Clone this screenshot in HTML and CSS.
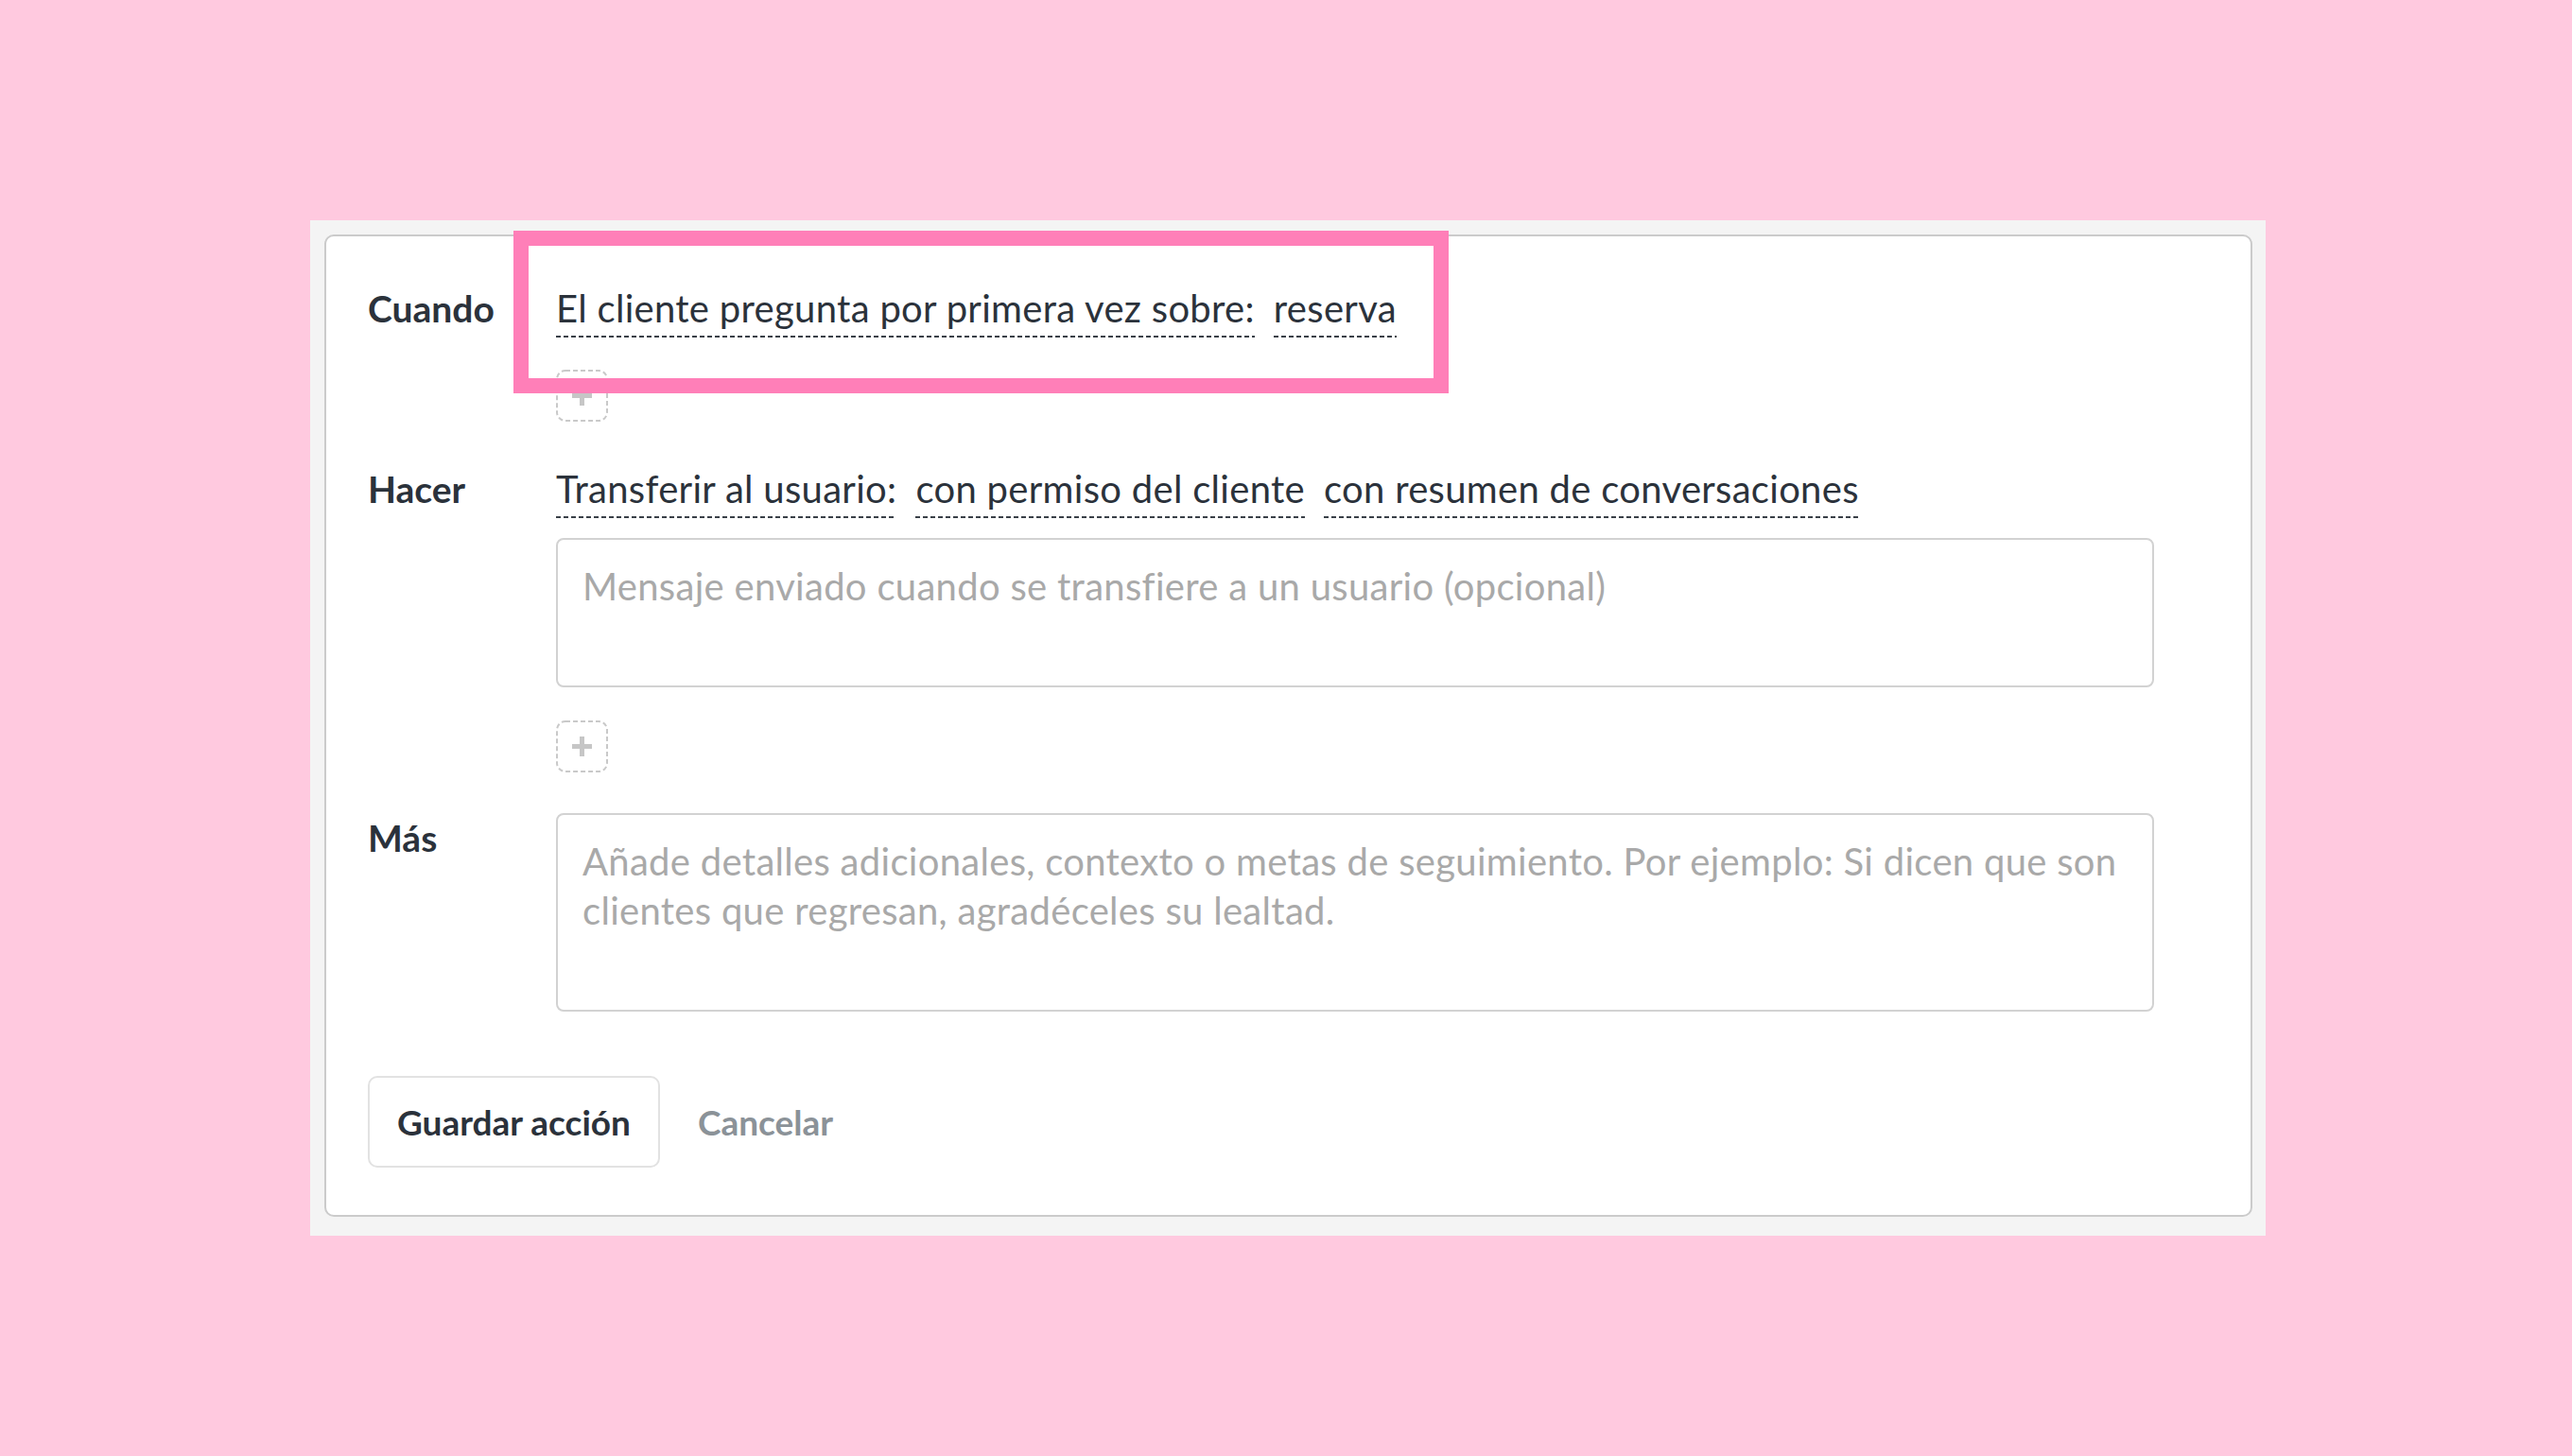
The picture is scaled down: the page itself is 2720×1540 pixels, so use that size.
FILE: index.html
```html
<!DOCTYPE html>
<html lang="es">
<head>
    <meta charset="UTF-8">
    <meta name="viewport" content="width=device-width, initial-scale=1.0">
    <title>Acción</title>
    <link rel="stylesheet" href="styles.css">
</head>
<body>
    <div class="frame">
        <div class="card">
            <div class="highlight"></div>

            <div class="row">
                <div class="label">Cuando</div>
                <div class="content">
                    <div class="tokens">
                        <span class="token">El cliente pregunta por primera vez sobre:</span>
                        <span class="token">reserva</span>
                    </div>
                    <button class="add add-first">
                        <svg width="55" height="55" viewBox="0 0 55 55">
                            <rect x="1" y="1" width="53" height="53" rx="9" fill="none" stroke="#c9c9c9" stroke-width="2" stroke-dasharray="5 3"/>
                            <path d="M27.5 17v21M17 27.5h21" stroke="#c6c6c6" stroke-width="5"/>
                        </svg>
                    </button>
                </div>
            </div>

            <div class="row row-do">
                <div class="label">Hacer</div>
                <div class="content">
                    <div class="tokens">
                        <span class="token">Transferir al usuario:</span>
                        <span class="token">con permiso del cliente</span>
                        <span class="token">con resumen de conversaciones</span>
                    </div>
                    <textarea class="field field-short" placeholder="Mensaje enviado cuando se transfiere a un usuario (opcional)"></textarea>
                    <button class="add add-second">
                        <svg width="55" height="55" viewBox="0 0 55 55">
                            <rect x="1" y="1" width="53" height="53" rx="9" fill="none" stroke="#c9c9c9" stroke-width="2" stroke-dasharray="5 3"/>
                            <path d="M27.5 17v21M17 27.5h21" stroke="#c6c6c6" stroke-width="5"/>
                        </svg>
                    </button>
                </div>
            </div>

            <div class="row row-more">
                <div class="label">Más</div>
                <div class="content">
                    <textarea class="field field-tall" placeholder="Añade detalles adicionales, contexto o metas de seguimiento. Por ejemplo: Si dicen que son clientes que regresan, agradéceles su lealtad."></textarea>
                </div>
            </div>

            <div class="actions">
                <button class="save">Guardar acción</button>
                <button class="cancel">Cancelar</button>
            </div>
        </div>
    </div>
</body>
</html>
```

FILE: styles.css
```css
body {
    background: #ffc9df;
    font-family: Lato, "Liberation Sans", sans-serif;
    color: #2b323b;
    display: flex;
    justify-content: center;
    align-items: center;
    height: 100vh;
    margin: 0;
}
.frame {
    background: #f4f4f4;
    width: 2068px;
    box-sizing: border-box;
    padding: 15px 14px 20px 15px;
    margin-left: 4px;
}
.card {
    position: relative;
    background: white;
    border: 2px solid #cbcbcb;
    border-radius: 10px;
    padding: 50px 44px;
}
.highlight {
    position: absolute;
    left: 198px;
    top: -6px;
    width: 989px;
    height: 172px;
    box-sizing: border-box;
    border: 16px solid #ff7fb8;
    z-index: 2;
    pointer-events: none;
}
.row {
    display: grid;
    grid-template-columns: 199px 1690px;
}
.row-do {
    margin-top: 45px;
}
.row-more {
    margin-top: 43px;
}
.label {
    font-size: 39px;
    line-height: 52px;
    font-weight: bold;
}
.content {
    display: flex;
    flex-direction: column;
    align-items: flex-start;
}
.tokens {
    display: flex;
    gap: 20px;
}
.token {
    font-size: 40px;
    letter-spacing: 0.3px;
    line-height: 52px;
    padding-bottom: 5px;
    background: linear-gradient(to right, #3a4048 62%, transparent 0) left bottom / 8px 2px repeat-x;
}
.add {
    display: block;
    width: 55px;
    height: 55px;
    padding: 0;
    border: 0;
    background: none;
}
.add svg {
    display: block;
}
.add-first {
    margin-top: 34px;
}
.add-second {
    margin-top: 35px;
}
.field {
    display: block;
    width: 1690px;
    box-sizing: border-box;
    border: 2px solid #d2d2d2;
    border-radius: 8px;
    padding: 23px 18px 23px 26px;
    font-family: inherit;
    font-size: 40px;
    letter-spacing: 0.3px;
    line-height: 52px;
    color: #2b323b;
    resize: none;
    outline: none;
}
.field::placeholder {
    color: #a9a9a9;
}
.field-short {
    margin-top: 21px;
    height: 158px;
}
.field-tall {
    height: 210px;
}
.actions {
    display: flex;
    align-items: center;
    gap: 40px;
    margin-top: 68px;
}
.save, .cancel {
    font-family: inherit;
    font-size: 37px;
    font-weight: bold;
    background: white;
}
.save {
    height: 97px;
    padding: 0 29px;
    border: 2px solid #e2e2e2;
    border-radius: 10px;
    color: #2b323b;
}
.cancel {
    border: 0;
    padding: 0;
    color: #8b9298;
}
```
